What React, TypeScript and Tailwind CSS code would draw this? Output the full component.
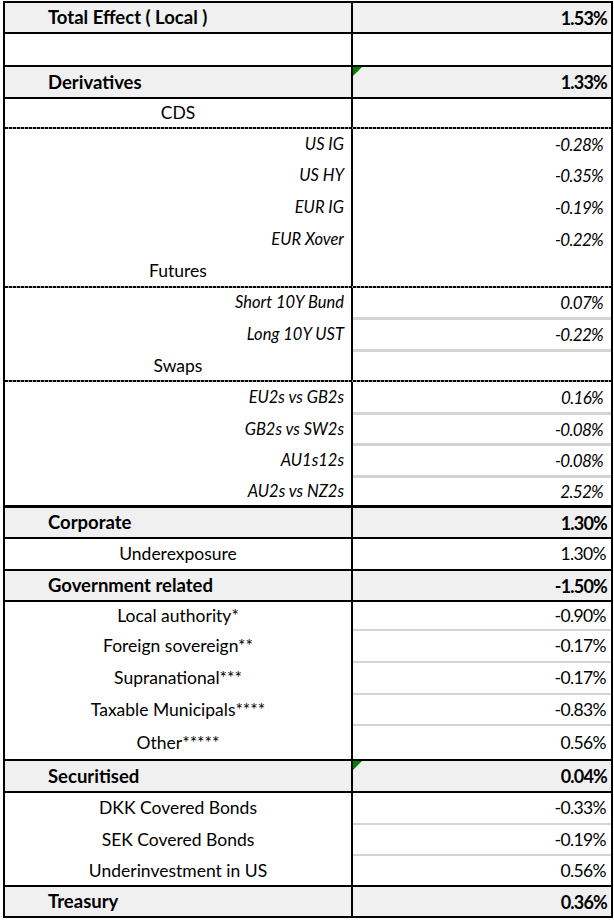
import React from 'react';

type Cell = {
  kind: 'row';
  label: string;
  value: string;
  type: 'head' | 'sub' | 'item' | 'blank';
  h: number;
  flag?: boolean;
};
type Line = { kind: 'line'; type: 'black' | 'thick' | 'dash' | 'gray'; h: number };

const rows: (Cell | Line)[] = [
  { kind: 'row', label: 'Total Effect ( Local )', value: '1.53%', type: 'head', h: 29 },
  { kind: 'line', type: 'black', h: 2 },
  { kind: 'row', label: '', value: '', type: 'blank', h: 31 },
  { kind: 'line', type: 'black', h: 2 },
  { kind: 'row', label: 'Derivatives', value: '1.33%', type: 'head', h: 30, flag: true },
  { kind: 'line', type: 'black', h: 2 },
  { kind: 'row', label: 'CDS', value: '', type: 'sub', h: 28 },
  { kind: 'line', type: 'dash', h: 2 },
  { kind: 'row', label: 'US IG', value: '-0.28%', type: 'item', h: 30 },
  { kind: 'row', label: 'US HY', value: '-0.35%', type: 'item', h: 32 },
  { kind: 'row', label: 'EUR IG', value: '-0.19%', type: 'item', h: 32 },
  { kind: 'row', label: 'EUR Xover', value: '-0.22%', type: 'item', h: 32 },
  { kind: 'row', label: 'Futures', value: '', type: 'sub', h: 31 },
  { kind: 'line', type: 'dash', h: 2 },
  { kind: 'row', label: 'Short 10Y Bund', value: '0.07%', type: 'item', h: 29 },
  { kind: 'line', type: 'gray', h: 3 },
  { kind: 'row', label: 'Long 10Y UST ', value: '-0.22%', type: 'item', h: 29 },
  { kind: 'line', type: 'gray', h: 3 },
  { kind: 'row', label: 'Swaps', value: '', type: 'sub', h: 28 },
  { kind: 'line', type: 'dash', h: 2 },
  { kind: 'row', label: 'EU2s vs GB2s', value: '0.16%', type: 'item', h: 30 },
  { kind: 'line', type: 'gray', h: 3 },
  { kind: 'row', label: 'GB2s vs SW2s', value: '-0.08%', type: 'item', h: 28 },
  { kind: 'line', type: 'gray', h: 3 },
  { kind: 'row', label: 'AU1s12s', value: '-0.08%', type: 'item', h: 29 },
  { kind: 'line', type: 'gray', h: 3 },
  { kind: 'row', label: 'AU2s vs NZ2s', value: '2.52%', type: 'item', h: 27 },
  { kind: 'line', type: 'thick', h: 3 },
  { kind: 'row', label: 'Corporate', value: '1.30%', type: 'head', h: 29 },
  { kind: 'line', type: 'black', h: 2 },
  { kind: 'row', label: 'Underexposure', value: '1.30%', type: 'sub', h: 30 },
  { kind: 'line', type: 'black', h: 2 },
  { kind: 'row', label: 'Government related', value: '-1.50%', type: 'head', h: 29 },
  { kind: 'line', type: 'black', h: 2 },
  { kind: 'row', label: 'Local authority*', value: '-0.90%', type: 'sub', h: 27 },
  { kind: 'line', type: 'gray', h: 2 },
  { kind: 'row', label: 'Foreign sovereign**', value: '-0.17%', type: 'sub', h: 30 },
  { kind: 'line', type: 'gray', h: 2 },
  { kind: 'row', label: 'Supranational***', value: '-0.17%', type: 'sub', h: 30 },
  { kind: 'line', type: 'gray', h: 2 },
  { kind: 'row', label: 'Taxable Municipals****', value: '-0.83%', type: 'sub', h: 29 },
  { kind: 'line', type: 'gray', h: 2 },
  { kind: 'row', label: 'Other*****', value: '0.56%', type: 'sub', h: 33 },
  { kind: 'line', type: 'black', h: 2 },
  { kind: 'row', label: 'Securitised', value: '0.04%', type: 'head', h: 30, flag: true },
  { kind: 'line', type: 'black', h: 2 },
  { kind: 'row', label: 'DKK Covered Bonds', value: '-0.33%', type: 'sub', h: 30 },
  { kind: 'line', type: 'gray', h: 2 },
  { kind: 'row', label: 'SEK Covered Bonds', value: '-0.19%', type: 'sub', h: 29 },
  { kind: 'line', type: 'gray', h: 2 },
  { kind: 'row', label: 'Underinvestment in US', value: '0.56%', type: 'sub', h: 29 },
  { kind: 'line', type: 'black', h: 2 },
  { kind: 'row', label: 'Treasury', value: '0.36%', type: 'head', h: 29 },
];

const Flag = () => (
  <svg className="absolute left-0 top-0" width="9" height="9" viewBox="0 0 9 9">
    <polygon points="0,0 9,0 0,9" fill="#008000" />
  </svg>
);

const TableLine = ({ line }: { line: Line }) => {
  if (line.type === 'gray') {
    return (
      <div className="flex" style={{ height: line.h }}>
        <div className="w-[348px] shrink-0 bg-white border-r-2 border-black" />
        <div className="flex-1 bg-[#d4d4d4]" />
      </div>
    );
  }
  if (line.type === 'dash') {
    return <div className="h-[2px] bg-[repeating-linear-gradient(90deg,#000_0px,#000_3px,#a0a0a0_3px,#a0a0a0_4px)]" />;
  }
  return <div className="bg-black" style={{ height: line.h }} />;
};

const TableRow = ({ row }: { row: Cell }) => {
  const head = row.type === 'head';
  const item = row.type === 'item';
  return (
    <div className={`flex items-center ${head ? 'bg-[#f0f0f0]' : 'bg-white'}`} style={{ height: row.h }}>
      <div
        className={`w-[348px] shrink-0 h-full flex items-center border-r-2 border-black ${
          head
            ? 'pl-[43px] font-bold text-[18.5px]'
            : item
              ? 'justify-end pr-[7px] italic text-[16.5px]'
              : 'justify-center text-[17.5px]'
        }`}
      >
        {row.label}
      </div>
      <div
        className={`relative flex-1 h-full flex items-center justify-end ${
          head
            ? 'pr-[4px] font-bold text-[18px] tracking-[-0.8px]'
            : item
              ? 'pr-[8px] italic text-[17px] tracking-[-0.7px]'
              : 'pr-[5px] text-[17.5px] tracking-[-0.6px]'
        }`}
      >
        {row.flag && <Flag />}
        {row.value}
      </div>
    </div>
  );
};

export default function App() {
  return (
    <div className="w-[614px] h-[922px] bg-white pt-px pl-[3px]">
      <div className="w-[610px] border-2 border-black flex flex-col text-[16px] leading-none text-black font-['Lato',_sans-serif]">
        {rows.map((r, i) =>
          r.kind === 'row' ? <TableRow key={i} row={r} /> : <TableLine key={i} line={r} />
        )}
      </div>
    </div>
  );
}
